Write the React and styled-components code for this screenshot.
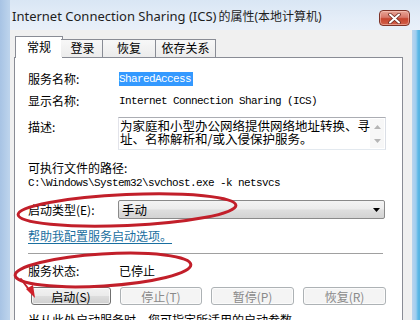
import React from 'react';
import styled, { createGlobalStyle } from 'styled-components';

const cjk = `"Noto Sans CJK SC", "Noto Sans", sans-serif`;
const mono = `"Liberation Mono", "Noto Sans CJK SC", monospace`;

const Global = createGlobalStyle`
  html, body { margin: 0; padding: 0; width: 420px; height: 320px; overflow: hidden; background: #f0f0f0; }
  #root { width: 420px; height: 320px; }
  * { box-sizing: border-box; }
`;

const Window = styled.div`
  position: relative;
  width: 420px;
  height: 320px;
  overflow: hidden;
  display: flex;
  flex-direction: column;
  padding-left: 10px;
  background: linear-gradient(90deg, #a7c3e4 0px, #bcd3ec 9px, #bcd3ec 412px, #b4d3ef 413px, #9fcdef 416px, #5cb9e7 418px, #55b0e0 420px);
`;

const TitleBar = styled.div`
  height: 30px;
  flex: none;
  display: flex;
  align-items: center;
  justify-content: space-between;
  padding: 2px 10px 0 2px;
  background: linear-gradient(180deg, #d9e6f4 0%, #e4edf8 60%, #e9f0f9 100%);
`;

const Title = styled.div`
  font-family: "Noto Sans", "Noto Sans CJK SC", sans-serif;
  font-size: 13px;
  color: #1e1e1e;
  white-space: nowrap;
`;

const TitleCjk = styled.span`
  font-family: "Noto Sans", "Noto Sans CJK SC", sans-serif;
  font-size: 12px;
  margin-left: 2px;
`;

const CloseButton = styled.div`
  width: 31px;
  height: 16px;
  margin-top: 4px;
  border: 1px solid #7e3328;
  border-radius: 4px;
  display: flex;
  align-items: center;
  justify-content: center;
  background: linear-gradient(180deg, #e7a596 0%, #d8786a 45%, #c5452f 55%, #d2604b 100%);
  box-shadow: inset 0 0 0 1px rgba(255, 210, 200, 0.5);
`;

const Client = styled.div`
  flex: 1;
  margin-right: 8px;
  background: #f0f0f0;
  padding: 6px 9px 0 4px;
  display: flex;
  flex-direction: column;
`;

const TabRow = styled.div`
  display: flex;
  align-items: flex-start;
  height: 21px;
  padding-left: 1px;
  position: relative;
  z-index: 2;
`;

const Tab = styled.div`
  font-family: ${cjk};
  font-size: 12px;
  line-height: 16px;
  color: #000;
  border: 1px solid #898c95;
  border-bottom: none;
  white-space: nowrap;
  text-align: center;
  width: ${p => p.$w}px;
  ${p => p.$active ? `
    height: 22px;
    padding-top: 2px;
    background: #fff;
    margin-right: -2px;
  ` : `
    height: 18px;
    margin-top: 3px;
    padding-top: 0px;
    background: linear-gradient(180deg, #f7f7f7 0%, #ececec 100%);
    border-left: none;
  `}
  &:nth-child(2) { border-left: none; padding-left: 2px; }
`;

const Panel = styled.div`
  flex: 1;
  background: #fff;
  border: 1px solid #898c95;
  border-bottom: none;
  padding: 0 17px 0 13px;
  display: flex;
  flex-direction: column;
`;

const Row = styled.div`
  display: grid;
  grid-template-columns: 91px 1fr;
  align-items: ${p => p.$top ? 'start' : 'center'};
  margin-top: ${p => p.$mt}px;
  min-height: ${p => p.$h || 14}px;
`;

const Label = styled.div`
  font-family: ${cjk};
  font-size: 12px;
  line-height: 14px;
  color: #000;
  white-space: nowrap;
  padding-top: ${p => p.$pt || 0}px;
`;

const Text = styled.div`
  font-family: ${cjk};
  font-size: 12px;
  line-height: 14px;
  color: ${p => p.$color || '#000'};
  white-space: nowrap;
  margin-top: ${p => p.$mt || 0}px;
`;

const MonoText = styled.div`
  font-family: ${mono};
  font-size: 11px;
  letter-spacing: -0.6px;
  line-height: ${p => p.$lh || 14}px;
  color: #000;
  white-space: nowrap;
  margin-top: ${p => p.$mt || 0}px;
`;

const Selected = styled.span`
  background: #3399ff;
  color: #fff;
  padding: 1px 2px 1px 0;
`;

const TextArea = styled.div`
  margin-left: -1px;
  height: 33px;
  border: 1px solid #abadb3;
  border-right-color: #dbdfe6;
  border-bottom-color: #e3e9ef;
  border-left-color: #e2e3ea;
  display: flex;
  background: #fff;
`;

const AreaText = styled.div`
  flex: 1;
  font-family: ${cjk};
  font-size: 12.5px;
  line-height: 13px;
  padding: 1px 0 0 1px;
  color: #000;
  white-space: nowrap;
`;

const ScrollBar = styled.div`
  width: 14px;
  margin: 1px 1px 1px 0;
  background: #f7f7f7;
  display: flex;
  flex-direction: column;
  justify-content: space-between;
  align-items: center;
  padding: 6px 0 5px;
`;

const Select = styled.div`
  margin-left: -1px;
  height: 19px;
  border: 1px solid #8a8a8a;
  border-radius: 2px;
  background: linear-gradient(180deg, #f4f4f4 0%, #ececec 48%, #dedede 52%, #d3d3d3 100%);
  display: flex;
  align-items: center;
  justify-content: space-between;
  padding: 0 4px 0 3px;
  font-family: ${cjk};
  font-size: 12.5px;
  color: #000;
`;

const Link = styled.div`
  font-family: ${cjk};
  font-size: 12px;
  line-height: 14px;
  color: #1a6fa0;
  text-decoration: underline;
  text-underline-offset: 2px;
  margin-top: ${p => p.$mt}px;
  white-space: nowrap;
`;

const Separator = styled.div`
  height: 1px;
  background: #a0a0a0;
  margin-top: ${p => p.$mt}px;
  margin-right: 2px;
`;

const ButtonRow = styled.div`
  display: grid;
  grid-template-columns: 80px 82px 83px 83px;
  column-gap: 9px;
  margin-top: ${p => p.$mt}px;
  padding-left: 3px;
`;

const Button = styled.div`
  height: 18px;
  border: 1px solid ${p => p.$disabled ? '#adb2b5' : '#707070'};
  border-radius: 3px;
  display: flex;
  align-items: center;
  justify-content: center;
  font-family: ${cjk};
  font-size: 12px;
  color: ${p => p.$disabled ? '#8a8a8a' : '#000'};
  background: ${p => p.$disabled
    ? '#f4f4f4'
    : 'linear-gradient(180deg, #f2f2f2 0%, #ebebeb 48%, #dddddd 52%, #cfcfcf 100%)'};
  box-shadow: inset 0 0 0 1px ${p => p.$disabled ? '#fbfbfb' : 'rgba(255,255,255,0.7)'};
`;

const Annotations = styled.svg`
  position: absolute;
  left: 0;
  top: 0;
  pointer-events: none;
  z-index: 5;
`;

const Arrow = ({ up }) => (
  <svg width="7" height="4" viewBox="0 0 7 4">
    <path d={up ? 'M0 4 L3.5 0 L7 4 Z' : 'M0 0 L3.5 4 L7 0 Z'} fill="#b5b5b5" />
  </svg>
);

export default function App() {
  return (
    <>
      <Global />
      <Window>
        <TitleBar>
          <Title>Internet Connection Sharing (ICS)<TitleCjk>的属性(本地计算机)</TitleCjk></Title>
          <CloseButton>
            <svg width="13" height="11" viewBox="0 0 13 11">
              <path d="M2 1.5 L11 9.5 M11 1.5 L2 9.5" stroke="#6b2a22" strokeWidth="3.6" strokeLinecap="round" />
              <path d="M2 1.5 L11 9.5 M11 1.5 L2 9.5" stroke="#ffffff" strokeWidth="2" strokeLinecap="round" />
            </svg>
          </CloseButton>
        </TitleBar>
        <Client>
          <TabRow>
            <Tab $active $w={48}>常规</Tab>
            <Tab $w={42}>登录</Tab>
            <Tab $w={53}>恢复</Tab>
            <Tab $w={60}>依存关系</Tab>
          </TabRow>
          <Panel>
            <Row $mt={14}>
              <Label>服务名称:</Label>
              <MonoText><Selected>SharedAccess</Selected></MonoText>
            </Row>
            <Row $mt={8}>
              <Label>显示名称:</Label>
              <MonoText>Internet Connection Sharing (ICS)</MonoText>
            </Row>
            <Row $mt={9} $h={33} $top>
              <Label $pt={3}>描述:</Label>
              <TextArea>
                <AreaText>
                  为家庭和小型办公网络提供网络地址转换、寻<br />址、名称解析和/或入侵保护服务。
                </AreaText>
                <ScrollBar>
                  <Arrow up />
                  <Arrow />
                </ScrollBar>
              </TextArea>
            </Row>
            <Text $mt={11}>可执行文件的路径:</Text>
            <MonoText $mt={2} $lh={12}>C:\Windows\System32\svchost.exe -k netsvcs</MonoText>
            <Row $mt={11} $h={19}>
              <Label>启动类型(E):</Label>
              <Select>
                <span>手动</span>
                <svg width="7" height="4" viewBox="0 0 7 4">
                  <path d="M0 0 L7 0 L3.5 4 Z" fill="#000" />
                </svg>
              </Select>
            </Row>
            <Link $mt={10}>帮助我配置服务启动选项。</Link>
            <Separator $mt={10} />
            <Row $mt={10}>
              <Label>服务状态:</Label>
              <Text>已停止</Text>
            </Row>
            <ButtonRow $mt={9}>
              <Button>启动(S)</Button>
              <Button $disabled>停止(T)</Button>
              <Button $disabled>暂停(P)</Button>
              <Button $disabled>恢复(R)</Button>
            </ButtonRow>
            <Text $mt={8}>当从此处启动服务时，您可指定所适用的启动参数。</Text>
          </Panel>
        </Client>
        <Annotations width="420" height="320" viewBox="0 0 420 320">
          <ellipse cx="127" cy="210" rx="109" ry="15.5" transform="rotate(-2.5 127 210)" fill="none" stroke="#c21f2a" strokeWidth="3" />
          <ellipse cx="103" cy="270" rx="88" ry="16" transform="rotate(-3.5 103 270)" fill="none" stroke="#c21f2a" strokeWidth="3" />
          <path d="M21 279 L30 291" stroke="#c21f2a" strokeWidth="2" strokeLinecap="round" />
          <path d="M26 289 L35 298 L33 285 Z" fill="#d0202a" />
        </Annotations>
      </Window>
    </>
  );
}
